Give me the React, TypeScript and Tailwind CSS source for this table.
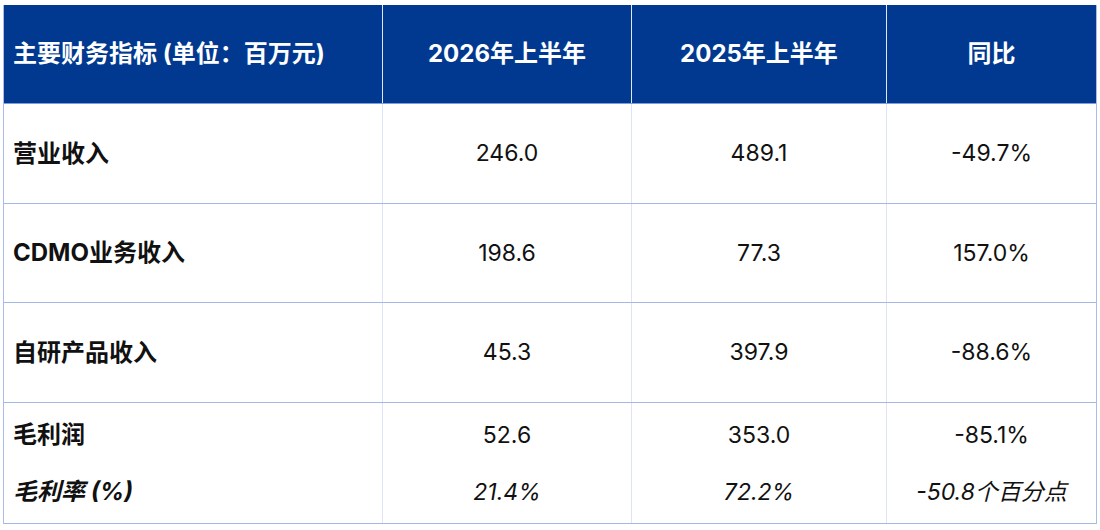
import React from "react";

const font = { fontFamily: '"Inter", "Noto Sans CJK SC", sans-serif' };

type Row = { label: string; a: string; b: string; c: string };

const rows: Row[] = [
  { label: "营业收入", a: "246.0", b: "489.1", c: "-49.7%" },
  { label: "CDMO业务收入", a: "198.6", b: "77.3", c: "157.0%" },
  { label: "自研产品收入", a: "45.3", b: "397.9", c: "-88.6%" },
];

export default function App() {
  return (
    <div className="w-[1100px] h-[530px] bg-white" style={font}>
      <div className="ml-[3px] pt-[5px] w-[1094px]">
        <div className="border-l border-r border-[#a9bde8]">
          {/* header */}
          <div className="flex h-[99px] bg-[#00398f] text-white font-bold text-[24px] border-b border-[#7f9ddb]">
            <div className="w-[378px] flex items-center pl-[9px]">主要财务指标 (单位：百万元)</div>
            <div className="w-[249px] flex items-center justify-center border-l border-[#dfe6f5]">2026年上半年</div>
            <div className="w-[255px] flex items-center justify-center border-l border-[#dfe6f5]">2025年上半年</div>
            <div className="flex-1 flex items-center justify-center border-l border-[#dfe6f5]">同比</div>
          </div>
          {rows.map((r, i) => (
            <div
              key={r.label}
              className={`flex text-[23px] text-[#111111] border-b border-[#a3b8e6] ${i === 1 ? "h-[99px]" : "h-[100px]"}`}
            >
              <div className="w-[378px] flex items-center pl-[9px] font-bold text-[24px]">{r.label}</div>
              <div className="w-[249px] flex items-center justify-center border-l border-[#dde4f3]">{r.a}</div>
              <div className="w-[255px] flex items-center justify-center border-l border-[#dde4f3]">{r.b}</div>
              <div className="flex-1 flex items-center justify-center border-l border-[#dde4f3]">{r.c}</div>
            </div>
          ))}
          <div className="flex h-[121px] text-[23px] text-[#111111] border-b border-[#a3b8e6]">
            <div className="w-[378px] flex flex-col pt-[14px] gap-[21px] pl-[9px] font-bold text-[24px]">
              <div className="h-[36px] flex items-center">毛利润</div>
              <div className="h-[36px] flex items-center italic">毛利率 (%)</div>
            </div>
            <div className="w-[249px] flex flex-col items-center pt-[14px] gap-[21px] border-l border-[#dde4f3]">
              <div className="h-[36px] flex items-center">52.6</div>
              <div className="h-[36px] flex items-center italic">21.4%</div>
            </div>
            <div className="w-[255px] flex flex-col items-center pt-[14px] gap-[21px] border-l border-[#dde4f3]">
              <div className="h-[36px] flex items-center">353.0</div>
              <div className="h-[36px] flex items-center italic">72.2%</div>
            </div>
            <div className="flex-1 flex flex-col items-center pt-[14px] gap-[21px] border-l border-[#dde4f3]">
              <div className="h-[36px] flex items-center">-85.1%</div>
              <div className="h-[36px] flex items-center italic">-50.8个百分点</div>
            </div>
          </div>
        </div>
      </div>
    </div>
  );
}
